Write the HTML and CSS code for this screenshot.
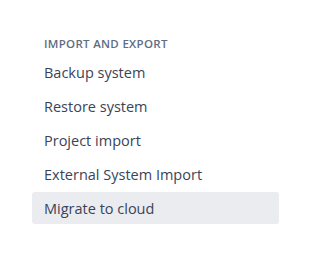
FILE: index.html
```html
<!DOCTYPE html>
<html lang="en">
<head>
    <meta charset="UTF-8">
    <title>Import and export</title>
    <link rel="stylesheet" href="styles.css">
</head>
<body>
<nav class="side-nav">
    <h2 class="nav-heading">Import and export</h2>
    <ul class="nav-list">
        <li class="nav-item">Backup system</li>
        <li class="nav-item">Restore system</li>
        <li class="nav-item">Project import</li>
        <li class="nav-item">External System Import</li>
        <li class="nav-item selected">Migrate to cloud</li>
    </ul>
</nav>
</body>
</html>
```
FILE: styles.css
```css
body {
    margin: 0;
    background: #fff;
    font-family: "Open Sans", "Noto Sans", sans-serif;
}
.side-nav {
    width: 247px;
    padding: 36px 0 0 32px;
}
.nav-heading {
    margin: 0 0 4px;
    padding-left: 12px;
    font-size: 11.5px;
    font-weight: 600;
    line-height: 16px;
    letter-spacing: 0.3px;
    text-transform: uppercase;
    color: #5e6c84;
}
.nav-list {
    list-style-type: none;
    padding: 0;
    margin: 0;
    display: flex;
    flex-direction: column;
    gap: 2px;
}
.nav-item {
    height: 32px;
    padding: 2px 0 0 12px;
    box-sizing: border-box;
    line-height: 30px;
    font-size: 14.5px;
    color: #3a4358;
    border-radius: 3px;
}
.nav-item.selected {
    background-color: #ebecf0;
}
```
